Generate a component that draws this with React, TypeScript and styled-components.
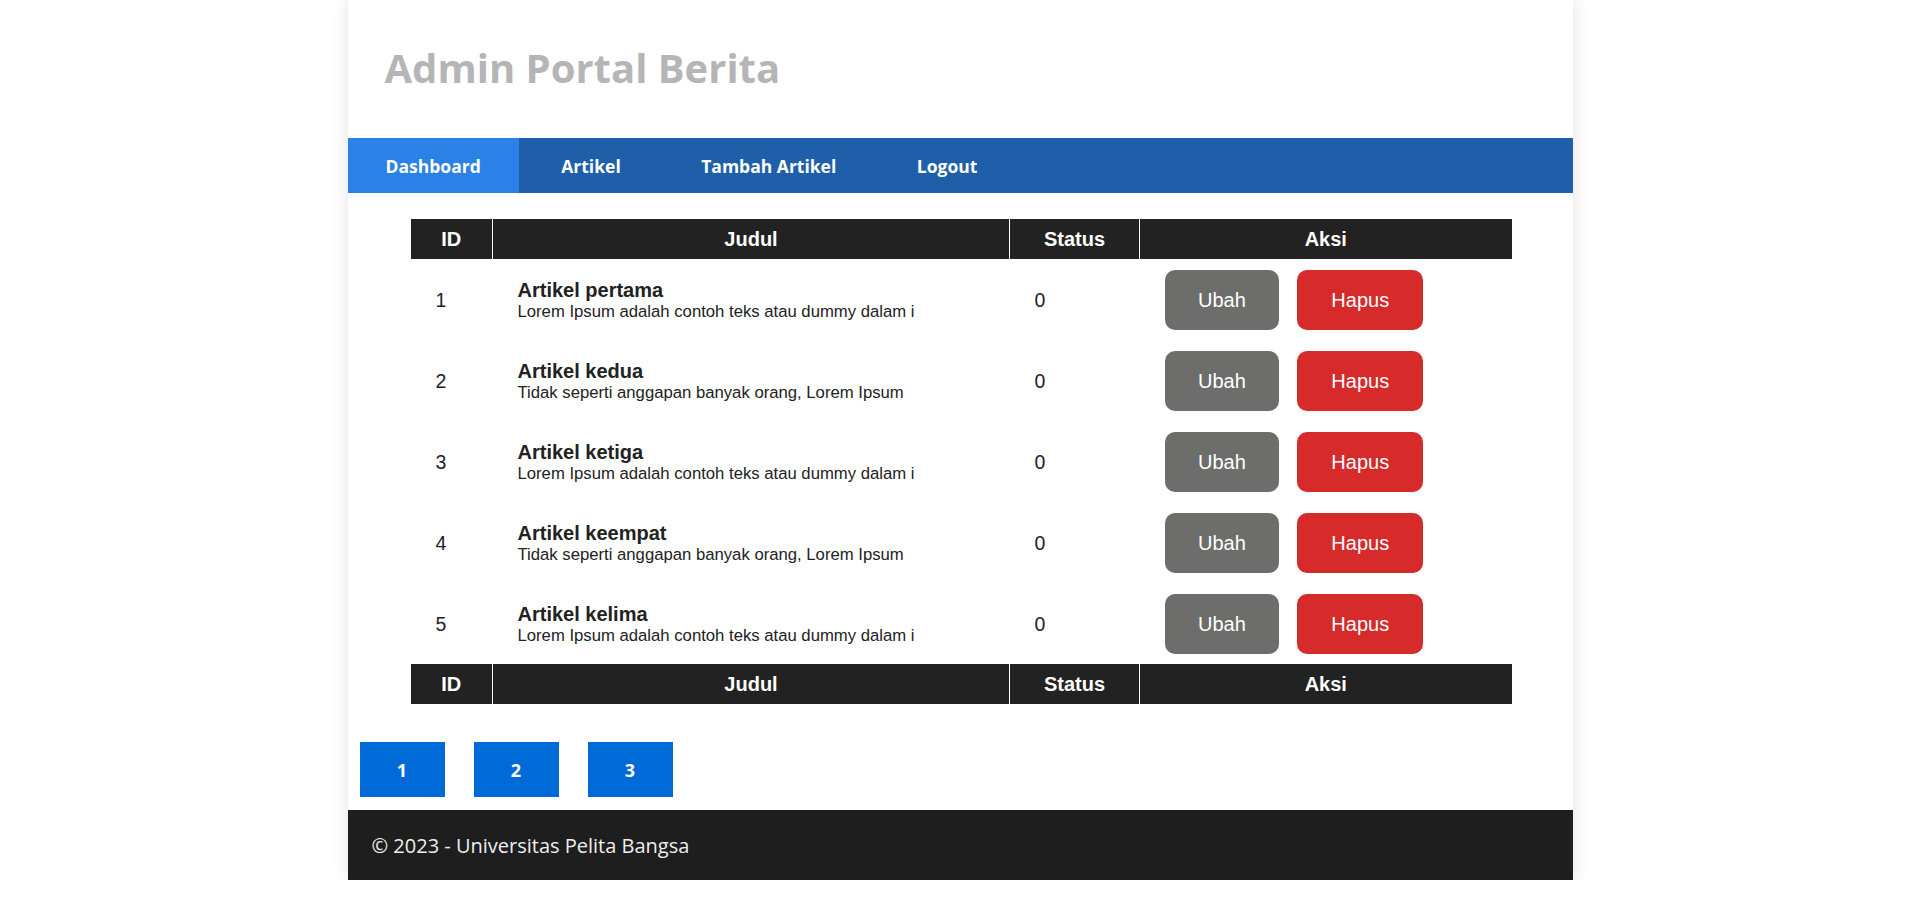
import React from 'react'
import styled, { createGlobalStyle } from 'styled-components'

const GlobalStyle = createGlobalStyle`
  body {
    margin: 0;
    background: #fff;
    font-family: "Open Sans", "Liberation Sans", sans-serif;
  }
`

const Container = styled.div`
  width: 1225px;
  margin: 0 auto;
  background: #fff;
  box-shadow: 0 0 16px rgba(0, 0, 0, 0.12);
`

const Header = styled.header`
  padding: 40px 37px 43px;
`

const Title = styled.h1`
  margin: 0;
  font-family: "Open Sans", sans-serif;
  font-size: 40px;
  font-weight: 700;
  color: #b5b5b5;
`

const Nav = styled.nav`
  display: flex;
  gap: 4.5px;
  height: 55px;
  background: #1f5fa9;
`

const NavLink = styled.a<{ $active?: boolean }>`
  display: flex;
  align-items: center;
  padding: 0 38px;
  font-family: "Open Sans", sans-serif;
  font-size: 17.5px;
  font-weight: 700;
  color: #fff;
  text-decoration: none;
  background: ${(p) => (p.$active ? '#2b81e6' : 'transparent')};
`

const Main = styled.main`
  padding: 26px 61px 0 63px;
`

const Table = styled.table`
  width: 100%;
  border-collapse: collapse;
  table-layout: fixed;
  font-family: "Liberation Sans", Arial, sans-serif;
`

const Th = styled.th`
  height: 40px;
  padding: 0;
  background: #222;
  color: #fff;
  font-size: 20px;
  font-weight: 700;
  text-align: center;
  border-left: 1px solid #fff;
  &:first-child {
    border-left: none;
  }
`

const Td = styled.td`
  padding: 11px 25px 10px;
  vertical-align: middle;
  color: #222;
  font-size: 19.5px;
  text-align: left;
`

const ArticleTitle = styled.div`
  font-size: 20px;
  font-weight: 700;
  color: #222;
`

const ArticleText = styled.div`
  font-size: 16.7px;
  color: #222;
`

const Actions = styled.div`
  display: flex;
  gap: 18px;
`

const ActionButton = styled.a<{ $variant: 'edit' | 'delete' }>`
  display: inline-flex;
  align-items: center;
  height: 60px;
  padding: 0 ${(p) => (p.$variant === 'edit' ? '33.5px' : '34px')};
  border-radius: 10px;
  font-size: 20px;
  color: #fff;
  text-decoration: none;
  background: ${(p) => (p.$variant === 'edit' ? '#6d6e6b' : '#d62a2b')};
`

const Pagination = styled.div`
  display: flex;
  gap: 29px;
  padding: 38px 0 13px;
  margin-left: -51px;
`

const PageLink = styled.a`
  display: flex;
  align-items: center;
  justify-content: center;
  width: 85px;
  height: 55px;
  background: #006ad9;
  color: #fff;
  font-family: "Open Sans", sans-serif;
  font-size: 18px;
  font-weight: 700;
  text-decoration: none;
`

const Footer = styled.footer`
  display: flex;
  align-items: center;
  height: 70px;
  padding: 0 24px;
  background: #1e1e1e;
  color: #eee;
  font-family: "Open Sans", sans-serif;
  font-size: 20px;
`

const articles = [
  { id: 1, judul: 'Artikel pertama', isi: 'Lorem Ipsum adalah contoh teks atau dummy dalam i' },
  { id: 2, judul: 'Artikel kedua', isi: 'Tidak seperti anggapan banyak orang, Lorem Ipsum' },
  { id: 3, judul: 'Artikel ketiga', isi: 'Lorem Ipsum adalah contoh teks atau dummy dalam i' },
  { id: 4, judul: 'Artikel keempat', isi: 'Tidak seperti anggapan banyak orang, Lorem Ipsum' },
  { id: 5, judul: 'Artikel kelima', isi: 'Lorem Ipsum adalah contoh teks atau dummy dalam i' },
]

const HeadRow = () => (
  <tr>
    <Th>ID</Th>
    <Th>Judul</Th>
    <Th>Status</Th>
    <Th>Aksi</Th>
  </tr>
)

export default function App() {
  return (
    <>
      <GlobalStyle />
      <Container>
        <Header>
          <Title>Admin Portal Berita</Title>
        </Header>
        <Nav>
          <NavLink href="#" $active>Dashboard</NavLink>
          <NavLink href="#">Artikel</NavLink>
          <NavLink href="#">Tambah Artikel</NavLink>
          <NavLink href="#">Logout</NavLink>
        </Nav>
        <Main>
          <Table>
            <colgroup>
              <col style={{ width: 82 }} />
              <col style={{ width: 517 }} />
              <col style={{ width: 130 }} />
              <col style={{ width: 372 }} />
            </colgroup>
            <thead>
              <HeadRow />
            </thead>
            <tbody>
              {articles.map((a) => (
                <tr key={a.id}>
                  <Td>{a.id}</Td>
                  <Td>
                    <ArticleTitle>{a.judul}</ArticleTitle>
                    <ArticleText>{a.isi}</ArticleText>
                  </Td>
                  <Td>0</Td>
                  <Td>
                    <Actions>
                      <ActionButton href="#" $variant="edit">Ubah</ActionButton>
                      <ActionButton href="#" $variant="delete">Hapus</ActionButton>
                    </Actions>
                  </Td>
                </tr>
              ))}
            </tbody>
            <tfoot>
              <HeadRow />
            </tfoot>
          </Table>
          <Pagination>
            <PageLink href="#">1</PageLink>
            <PageLink href="#">2</PageLink>
            <PageLink href="#">3</PageLink>
          </Pagination>
        </Main>
        <Footer>© 2023 - Universitas Pelita Bangsa</Footer>
      </Container>
    </>
  )
}
